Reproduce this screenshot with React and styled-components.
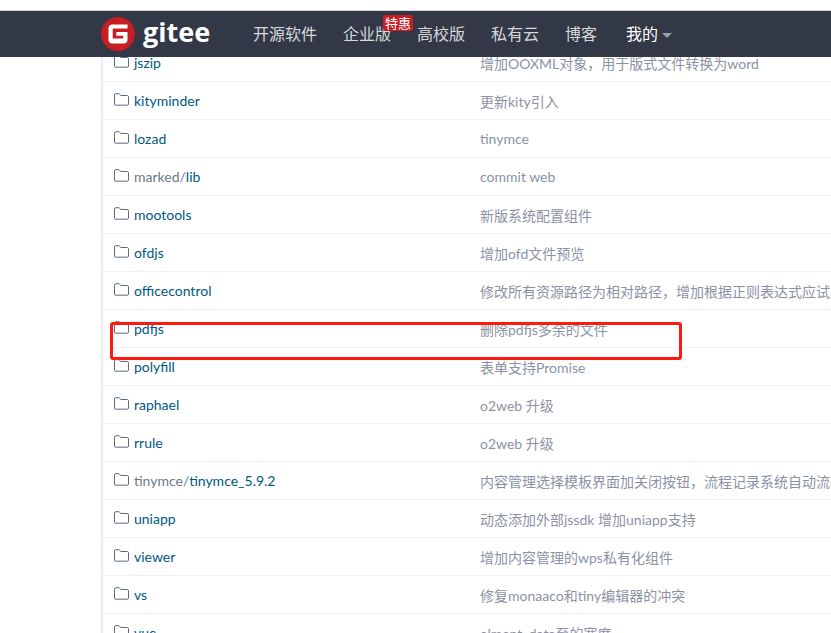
import React from "react";
import styled, { createGlobalStyle } from "styled-components";

const rows = [
  { name: "jszip", desc: "增加OOXML对象，用于版式文件转换为word" },
  { name: "kityminder", desc: "更新kity引入" },
  { name: "lozad", desc: "tinymce" },
  { name: "marked", sub: "lib", desc: "commit web" },
  { name: "mootools", desc: "新版系统配置组件" },
  { name: "ofdjs", desc: "增加ofd文件预览" },
  { name: "officecontrol", desc: "修改所有资源路径为相对路径，增加根据正则表达式应试应用的路径配置" },
  { name: "pdfjs", desc: "删除pdfjs多余的文件" },
  { name: "polyfill", desc: "表单支持Promise" },
  { name: "raphael", desc: "o2web 升级" },
  { name: "rrule", desc: "o2web 升级" },
  { name: "tinymce", sub: "tinymce_5.9.2", desc: "内容管理选择模板界面加关闭按钮，流程记录系统自动流转的处理人显示" },
  { name: "uniapp", desc: "动态添加外部jssdk 增加uniapp支持" },
  { name: "viewer", desc: "增加内容管理的wps私有化组件" },
  { name: "vs", desc: "修复monaaco和tiny编辑器的冲突" },
  { name: "vue", desc: "elment_data至的宽度" },
];

const navItems = [
  { label: "开源软件" },
  { label: "企业版", badge: "特惠" },
  { label: "高校版" },
  { label: "私有云" },
  { label: "博客" },
];

function FolderIcon() {
  return (
    <FolderSvg viewBox="0 0 15 13" width="15" height="13">
      <path d="M.5 11V2C.5 1.2 1 .7 1.8.7h3.4l1.5 1.8h6.6c.7 0 1.2.5 1.2 1.2V11c0 .7-.5 1.2-1.2 1.2H1.700C1 12.200.5 11.700.5 11z" fill="none" stroke="#5f6b7d" strokeWidth="1" />
    </FolderSvg>
  );
}

function GiteeMark() {
  return (
    <svg viewBox="0 0 34 34" width="34" height="34">
      <circle cx="17" cy="17" r="17" fill="#c71d23" />
      <path d="M7.500 11c0-2 1.500-3.500 3.500-3.500h15.500v4H12.700c-.6 0-1 .4-1 1v8c0 .6.4 1 1 1h8.600c.6 0 1-.4 1-1v-1.800h-7v-3.700h11.200V23c0 2-1.500 3.500-3.500 3.500H11c-2 0-3.500-1.500-3.500-3.500z" fill="#fff" />
    </svg>
  );
}

export default function App() {
  return (
    <Page>
      <GlobalStyle />
      <Navbar>
        <Brand>
          <GiteeMark />
          <BrandName>gitee</BrandName>
        </Brand>
        <NavList>
          {navItems.map((item) => (
            <NavItem key={item.label}>
              {item.label}
              {item.badge && <Badge>{item.badge}</Badge>}
            </NavItem>
          ))}
          <NavItem $active>
            我的
            <Caret />
          </NavItem>
        </NavList>
      </Navbar>
      <FileList>
        {rows.map((row) => (
          <Row key={row.name}>
            <NameCell>
              <FolderIcon />
              <Name>
                {row.sub ? <Parent>{row.name}/</Parent> : row.name}
                {row.sub}
              </Name>
            </NameCell>
            <Desc>{row.desc}</Desc>
          </Row>
        ))}
        <Highlight />
      </FileList>
    </Page>
  );
}

const GlobalStyle = createGlobalStyle`
  html, body {
    margin: 0;
    padding: 0;
    background: #fff;
  }
`;

const Page = styled.div`
  width: 831px;
  height: 633px;
  padding-top: 10px;
  box-sizing: border-box;
  overflow: hidden;
  font-family: Lato, "Noto Sans CJK SC", sans-serif;
`;

const Navbar = styled.header`
  position: relative;
  z-index: 2;
  display: flex;
  align-items: center;
  height: 47px;
  box-sizing: border-box;
  padding-left: 101px;
  background: #323846;
  border-top: 1px solid #d4d5d7;
`;

const Brand = styled.div`
  display: flex;
  align-items: center;
  gap: 8px;
  width: 152px;
`;

const BrandName = styled.span`
  color: #fff;
  font-family: "Open Sans", sans-serif;
  font-size: 27px;
  font-weight: 700;
  line-height: 34px;
  margin-top: -4px;
`;

const NavList = styled.nav`
  display: flex;
  gap: 26px;
`;

const NavItem = styled.span`
  position: relative;
  display: flex;
  align-items: center;
  color: ${(props) => (props.$active ? "#fff" : "#d6d8dc")};
  font-size: 16px;
  line-height: 22px;
  ${(props) => props.$active && "margin-left: 3px;"}
`;

const Badge = styled.span`
  position: absolute;
  top: -8px;
  left: 40px;
  padding: 0 2px;
  background: #c71d23;
  border-radius: 2px;
  color: #fff;
  font-size: 13px;
  line-height: 16px;
  white-space: nowrap;
`;

const Caret = styled.i`
  width: 0;
  height: 0;
  margin: 3px 0 0 4px;
  border-top: 5px solid #9a9ea6;
  border-left: 5px solid transparent;
  border-right: 5px solid transparent;
`;

const FileList = styled.section`
  position: relative;
  margin: -14px 0 0 101px;
  padding-top: 1px;
  border-left: 2px solid #e9ecf0;
`;

const Row = styled.div`
  display: flex;
  align-items: center;
  height: 38px;
  box-sizing: border-box;
  padding-left: 11px;
  border-bottom: 1px solid #f1f2f4;
  white-space: nowrap;
`;

const NameCell = styled.div`
  display: flex;
  align-items: center;
  gap: 5px;
  width: 366px;
  flex-shrink: 0;
  font-size: 14px;
`;

const FolderSvg = styled.svg`
  flex-shrink: 0;
  margin-top: -3px;
`;

const Name = styled.span`
  color: #005980;
`;

const Parent = styled.span`
  color: #6b7a86;
`;

const Desc = styled.span`
  color: #8c92a4;
  font-size: 14px;
`;

const Highlight = styled.div`
  position: absolute;
  top: 279px;
  left: 7px;
  width: 572px;
  height: 38px;
  box-sizing: border-box;
  border: 3px solid #ff1a10;
  border-radius: 3px;
`;
